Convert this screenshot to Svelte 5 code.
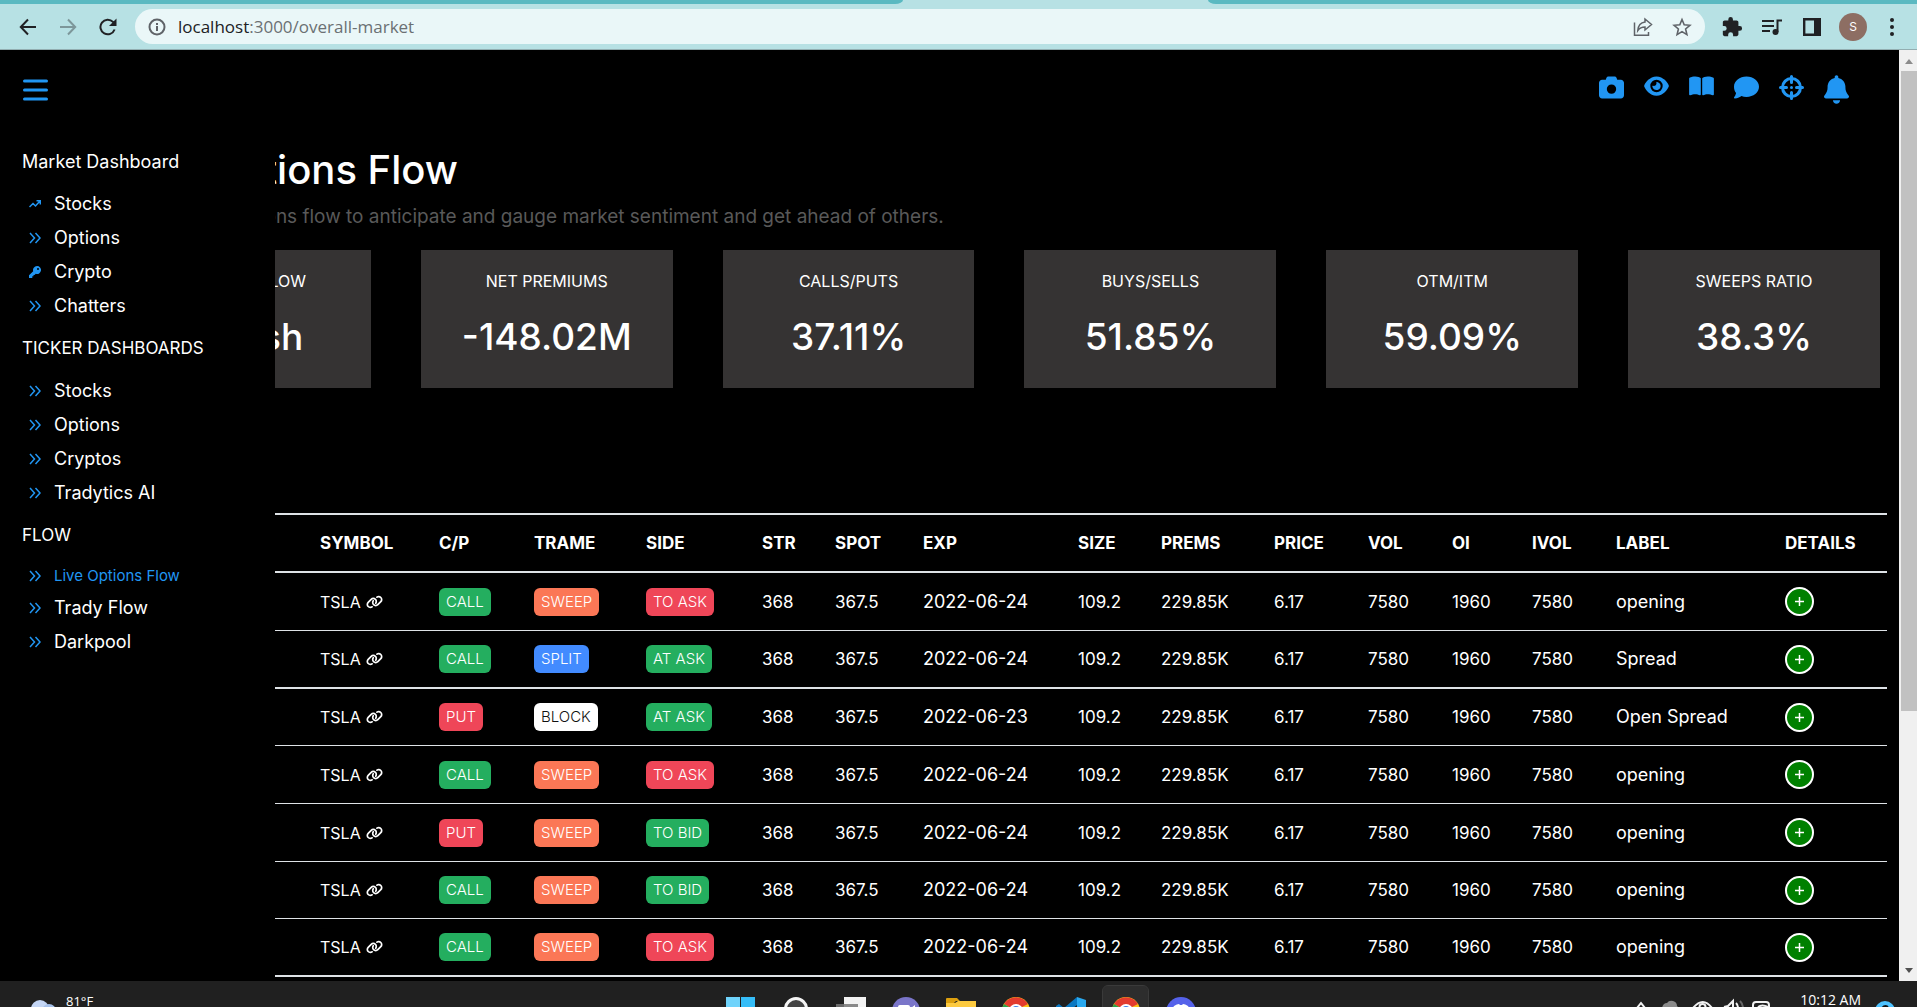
<script>
  const groups = [
    {
      title: 'Market Dashboard',
      large: true,
      items: [
        { label: 'Stocks', icon: 'trend' },
        { label: 'Options', icon: 'angles' },
        { label: 'Crypto', icon: 'key' },
        { label: 'Chatters', icon: 'angles' }
      ]
    },
    {
      title: 'TICKER DASHBOARDS',
      items: [
        { label: 'Stocks', icon: 'angles' },
        { label: 'Options', icon: 'angles' },
        { label: 'Cryptos', icon: 'angles' },
        { label: 'Tradytics AI', icon: 'angles' }
      ]
    },
    {
      title: 'FLOW',
      items: [
        { label: 'Live Options Flow', icon: 'angles', active: true },
        { label: 'Trady Flow', icon: 'angles' },
        { label: 'Darkpool', icon: 'angles' }
      ]
    }
  ];

  const cards = [
    ['OVERALL FLOW', 'Bullish'],
    ['NET PREMIUMS', '-148.02M'],
    ['CALLS/PUTS', '37.11%'],
    ['BUYS/SELLS', '51.85%'],
    ['OTM/ITM', '59.09%'],
    ['SWEEPS RATIO', '38.3%']
  ];

  const columns = [
    ['TIME', 191], ['SYMBOL', 119], ['C/P', 95], ['TRAME', 112], ['SIDE', 116], ['STR', 73],
    ['SPOT', 88], ['EXP', 155], ['SIZE', 83], ['PREMS', 113], ['PRICE', 94], ['VOL', 84],
    ['OI', 80], ['IVOL', 84], ['LABEL', 169], ['DETAILS', 112]
  ];

  const tone = {
    CALL: 'green', PUT: 'red', SWEEP: 'orange', SPLIT: 'blue', BLOCK: 'white',
    'TO ASK': 'red', 'AT ASK': 'green', 'TO BID': 'green'
  };

  const rows = [
    ['CALL', 'SWEEP', 'TO ASK', '2022-06-24', 'opening'],
    ['CALL', 'SPLIT', 'AT ASK', '2022-06-24', 'Spread'],
    ['PUT', 'BLOCK', 'AT ASK', '2022-06-23', 'Open Spread'],
    ['CALL', 'SWEEP', 'TO ASK', '2022-06-24', 'opening'],
    ['PUT', 'SWEEP', 'TO BID', '2022-06-24', 'opening'],
    ['CALL', 'SWEEP', 'TO BID', '2022-06-24', 'opening'],
    ['CALL', 'SWEEP', 'TO ASK', '2022-06-24', 'opening']
  ];
</script>

{#snippet chrome()}
  <svg width="28" height="28" viewBox="0 0 28 28">
    <circle cx="14" cy="14" r="14" fill="#fbc116" />
    <path d="M14 14 2 7A14 14 0 0 1 26 7L20 10z" fill="#e33b2e" />
    <path d="M14 14 2 7A14 14 0 0 0 13 28L20 17z" fill="#2ba24c" />
    <circle cx="14" cy="14" r="7" fill="#fff" />
    <circle cx="14" cy="14" r="5" fill="#3b7de8" />
  </svg>
{/snippet}

<div class="screen">
  <div class="tabs"><div class="strip left"></div><div class="strip right"></div></div>
  <div class="toolbar">
    <button class="nav" aria-label="Back">
      <svg width="18" height="18" viewBox="0 0 18 18" fill="none" stroke="#202124" stroke-width="2"><path d="M17 9H2M9 1.500 1.800 9 9 16.500" /></svg>
    </button>
    <button class="nav" aria-label="Forward">
      <svg width="18" height="18" viewBox="0 0 18 18" fill="none" stroke="#7d979a" stroke-width="2"><path d="M1 9h15M9 1.500 16.200 9 9 16.500" /></svg>
    </button>
    <button class="nav" aria-label="Reload">
      <svg width="18" height="18" viewBox="0 0 18 18" fill="none" stroke="#202124" stroke-width="2"><path d="M15.600 11.500A7.300 7.300 0 1 1 14 3.900L16 6" /><path d="M17.500.500V8H10z" fill="#202124" stroke="none" /></svg>
    </button>
    <div class="omnibox">
      <svg width="18" height="18" viewBox="0 0 18 18" fill="none" stroke="#5f6368" stroke-width="2"><circle cx="9" cy="9" r="7.500" /><path d="M9 8v5M9 5v2" /></svg>
      <a class="url" href="http://localhost:3000/overall-market"><b>localhost</b>:3000/overall-market</a>
      <button aria-label="Share">
        <svg width="20" height="20" viewBox="0 0 20 20" fill="none" stroke="#5f6368" stroke-width="1.500"><path d="M1.500 5.500v12.700H15.500V15M12 2l6.500 5.500L12 13V10C8.500 10 6.500 11 4.800 13.500 5.200 8.500 8 5.500 12 5z" /></svg>
      </button>
      <button aria-label="Bookmark">
        <svg width="20" height="20" viewBox="0 0 20 20" fill="none" stroke="#5f6368" stroke-width="1.600"><path d="m10 2.500 2.200 5.300 5.700.500-4.300 3.700 1.300 5.600L10 14.600l-4.900 3 1.300-5.600L2.100 8.300l5.700-.500z" /></svg>
      </button>
    </div>
    <button class="nav" aria-label="Extensions">
      <svg width="22" height="22" viewBox="0 0 24 24" fill="#202124"><path d="M20.500 11H19V7c0-1.100-.9-2-2-2h-4V3.500a2.500 2.500 0 0 0-5 0V5H4c-1.100 0-2 .9-2 2v3.800h1.500a2.700 2.700 0 0 1 0 5.400H2V20c0 1.100.9 2 2 2h3.800v-1.500a2.700 2.700 0 0 1 5.400 0V22H17c1.100 0 2-.9 2-2v-4h1.500a2.500 2.500 0 0 0 0-5z" /></svg>
    </button>
    <button class="nav" aria-label="Media controls">
      <svg width="20" height="18" viewBox="0 0 20 18" fill="none" stroke="#202124" stroke-width="2"><path d="M0 3h12M0 8h12M0 13h8M15.500 14V2.500H20" /><circle cx="13.500" cy="14" r="3" fill="#202124" stroke="none" /></svg>
    </button>
    <button class="nav" aria-label="Side panel">
      <svg width="18" height="18" viewBox="0 0 18 18"><path d="M1.200 1.200h15.600v15.600H1.200z" fill="none" stroke="#202124" stroke-width="2.400" /><path d="M11 1h6v16h-6z" fill="#202124" /></svg>
    </button>
    <button class="avatar" aria-label="Profile">S</button>
    <button class="dots" aria-label="Menu">
      <svg width="6" height="18" viewBox="0 0 6 18" fill="#202124"><circle cx="3" cy="2" r="2" /><circle cx="3" cy="9" r="2" /><circle cx="3" cy="16" r="2" /></svg>
    </button>
  </div>

  <div class="viewport">
    <div class="page">
      <header>
        <button aria-label="Toggle menu">
          <svg width="25" height="24" viewBox="0 0 25 24" stroke="#2196f3" stroke-width="3" stroke-linecap="round"><path d="M1.500 3h22M1.500 12h22M1.500 21h22" /></svg>
        </button>
        <div class="actions">
          <button aria-label="Camera"><svg width="25" height="25" viewBox="0 0 512 512"><path d="M149.100 64.800L138.700 96H64C28.700 96 0 124.700 0 160V416c0 35.300 28.700 64 64 64H448c35.300 0 64-28.700 64-64V160c0-35.300-28.700-64-64-64H373.300L362.900 64.800C356.400 45.200 338.100 32 317.400 32H194.600c-20.700 0-39 13.200-45.500 32.800zM256 192a96 96 0 1 1 0 192 96 96 0 1 1 0-192z" fill-rule="evenodd" /></svg></button>
          <button aria-label="Watch"><svg width="25" height="22" viewBox="0 0 576 512"><path fill-rule="evenodd" d="M288 32c-80.800 0-145.500 36.800-192.600 80.600C48.600 156 17.300 208 2.500 243.700c-3.300 7.900-3.300 16.700 0 24.600C17.300 304 48.600 356 95.400 399.400C142.500 443.200 207.200 480 288 480s145.500-36.800 192.600-80.600c46.800-43.500 78.100-95.400 93-131.100c3.300-7.900 3.300-16.700 0-24.600c-14.900-35.700-46.200-87.700-93-131.100C433.500 68.800 368.800 32 288 32zM144 256a144 144 0 1 1 288 0 144 144 0 1 1 -288 0zm144-64c0 35.300-28.700 64-64 64c-7.100 0-13.900-1.200-20.300-3.300c-5.500-1.800-11.900 1.600-11.700 7.400c.3 6.900 1.300 13.800 3.200 20.700c13.700 51.200 66.400 81.600 117.600 67.900s81.600-66.400 67.900-117.600c-11.100-41.500-47.800-69.400-88.600-71.100c-5.800-.2-9.200 6.100-7.400 11.700c2.100 6.400 3.300 13.200 3.300 20.300z" /></svg></button>
          <button aria-label="Guide"><svg width="25" height="22" viewBox="0 0 576 512"><path d="M249.600 471.500c10.800 3.800 22.400-4.100 22.400-15.500V78.600c0-4.200-1.600-8.400-5-11C247.400 52 202.400 32 144 32C93.500 32 46.300 45.300 18.100 56.100C6.800 60.500 0 71.700 0 83.800V454.100c0 11.900 12.800 20.200 24.100 16.500C55.600 460.100 105.500 448 144 448c33.900 0 79 14 105.600 23.500zm76.800 0C353 462 398.100 448 432 448c38.500 0 88.400 12.100 119.900 22.600c11.300 3.800 24.100-4.600 24.100-16.500V83.800c0-12.100-6.800-23.300-18.100-27.600C529.700 45.300 482.500 32 432 32c-58.400 0-103.400 20-123 35.600c-3.300 2.600-5 6.800-5 11V456c0 11.400 11.700 19.300 22.400 15.500z" /></svg></button>
          <button aria-label="Chat"><svg width="25" height="25" viewBox="0 0 512 512"><path d="M512 240c0 114.900-114.600 208-256 208c-37.100 0-72.300-6.400-104.100-17.900c-11.900 8.700-31.300 20.600-54.300 30.600C73.600 471.100 44.700 480 16 480c-16 0-20-18-11-28c15-17 28-42 37-82C15.600 335 0 291 0 240C0 125.100 114.600 32 256 32s256 93.100 256 208z" /></svg></button>
          <button aria-label="Target"><svg class="line" width="25" height="25" viewBox="0 0 25 25"><circle cx="12.500" cy="12.500" r="9" /><path d="M12.500 1.500v6M12.500 17.500v6M1.500 12.500h6M17.500 12.500h6" /><circle class="dot" cx="12.500" cy="12.500" r="1.500" /></svg></button>
          <button aria-label="Alerts"><svg width="25" height="29" viewBox="0 0 448 512"><path d="M224 0c-17.700 0-32 14.300-32 32V51.200C119 66 64 130.600 64 208v18.800c0 47-17.300 92.400-48.500 127.600l-7.400 8.300c-8.400 9.400-10.400 22.900-5.300 34.400S19.400 416 32 416H416c12.600 0 24-7.400 29.200-18.900s3.100-25-5.300-34.400l-7.400-8.300C401.300 319.200 384 273.900 384 226.800V208c0-77.400-55-142-128-156.800V32c0-17.700-14.300-32-32-32zm45.300 493.300c12-12 18.700-28.300 18.700-45.300H224 160c0 17 6.700 33.300 18.700 45.300s28.300 18.700 45.300 18.700s33.300-6.700 45.300-18.700z" /></svg></button>
        </div>
      </header>

      <main>
        <h1>Live Options Flow</h1>
        <p>Use our live options flow to anticipate and gauge market sentiment and get ahead of others.</p>
        <section class="cards">
          {#each cards as [label, value]}
            <article>
              <h2>{label}</h2>
              <strong>{value}</strong>
            </article>
          {/each}
        </section>

        <table>
          <colgroup>
            {#each columns as [, width]}<col style:width="{width}px" />{/each}
          </colgroup>
          <thead>
            <tr>{#each columns as [name]}<th>{name}</th>{/each}</tr>
          </thead>
          <tbody>
            {#each rows as [cp, trame, side, exp, label]}
              <tr>
                <td></td>
                <td class="symbol">
                  <a href="#tsla">TSLA
                    <svg width="17" height="14" viewBox="0 0 640 512"><path d="M579.800 267.700c56.500-56.500 56.500-148 0-204.500c-50-50-128.800-56.500-186.300-15.400l-1.600 1.100c-14.400 10.300-17.700 30.300-7.400 44.600s30.300 17.700 44.600 7.400l1.600-1.100c32.100-22.900 76-19.300 103.800 8.600c31.500 31.500 31.500 82.500 0 114L422.300 334.800c-31.500 31.500-82.500 31.500-114 0c-27.900-27.900-31.500-71.800-8.600-103.800l1.100-1.600c10.300-14.400 6.900-34.400-7.400-44.600s-34.400-6.900-44.600 7.400l-1.100 1.600C206.500 251.200 213 330 263 380c56.500 56.500 148 56.500 204.500 0L579.800 267.700zM60.200 244.300c-56.500 56.500-56.500 148 0 204.500c50 50 128.800 56.500 186.300 15.400l1.600-1.100c14.400-10.300 17.700-30.300 7.400-44.600s-30.300-17.700-44.600-7.400l-1.600 1.100c-32.100 22.900-76 19.300-103.800-8.600C74 372 74 321 105.500 289.500L217.700 177.200c31.500-31.500 82.500-31.500 114 0c27.900 27.900 31.500 71.800 8.600 103.900l-1.100 1.600c-10.300 14.400-6.900 34.400 7.400 44.600s34.400 6.900 44.600-7.400l1.100-1.600C433.500 260.800 427 182 377 132c-56.500-56.500-148-56.500-204.500 0L60.200 244.300z" /></svg>
                  </a>
                </td>
                <td><span class="badge {tone[cp]}">{cp}</span></td>
                <td><span class="badge {tone[trame]}">{trame}</span></td>
                <td><span class="badge {tone[side]}">{side}</span></td>
                <td>368</td>
                <td>367.5</td>
                <td class="wide">{exp}</td>
                <td>109.2</td>
                <td>229.85K</td>
                <td>6.17</td>
                <td>7580</td>
                <td>1960</td>
                <td>7580</td>
                <td class="wide">{label}</td>
                <td>
                  <button class="plus" aria-label="Show details">
                    <svg width="11" height="11" viewBox="0 0 11 11" stroke="#fff" stroke-width="1.500"><path d="M5.500 1v9M1 5.500h9" /></svg>
                  </button>
                </td>
              </tr>
            {/each}
          </tbody>
        </table>
      </main>

      <aside>
        <nav>
          {#each groups as group}
            <h3 class:large={group.large}>{group.title}</h3>
            <ul>
              {#each group.items as item}
                <li class:active={item.active}>
                  {#if item.icon === 'trend'}
                    <svg width="12" height="12" viewBox="0 0 12 12"><path d="M.500 9 4 5.500 6.500 8 11 3M7.500 2.800H11.300V6.500" /></svg>
                  {:else if item.icon === 'key'}
                    <svg class="solid" width="12" height="12" viewBox="0 0 12 12"><path fill-rule="evenodd" d="M8 0a4 4 0 1 1-1.200 7.800L5.500 9H4.500v1.200H3.300V12H0V9.200L4.200 5.200A4 4 0 0 1 8 0zM9 2a1 1 0 1 0 0 2 1 1 0 0 0 0-2z" /></svg>
                  {:else}
                    <svg width="12" height="12" viewBox="0 0 12 12"><path d="M1 1l4.500 5L1 11M6.500 1 11 6 6.500 11" /></svg>
                  {/if}
                  <a href="#{item.label}">{item.label}</a>
                </li>
              {/each}
            </ul>
          {/each}
        </nav>
      </aside>
    </div>

    <div class="scrollbar">
      <i class="up"></i>
      <div class="thumb"></div>
      <i class="down"></i>
    </div>
  </div>

  <footer>
    <div class="weather">
      <svg width="28" height="16" viewBox="0 0 28 16"><circle cx="11" cy="10" r="9" fill="#c4d6f5" /><circle cx="20" cy="12" r="7" fill="#a5c0ea" /><circle cx="6" cy="14" r="6" fill="#a9c5ee" /></svg>
      <span>81°F</span>
    </div>
    <div class="apps">
      <span><svg width="30" height="28" viewBox="0 0 30 28"><path d="M0 0h14v13H0zM0 15h14v13H0z" fill="#6fd3fb" /><path d="M15 0h14v13H15zM15 15h14v13H15z" fill="#35bdf8" /></svg></span>
      <span><svg width="24" height="28" viewBox="0 0 24 28"><circle cx="12" cy="12" r="10.500" fill="#444" stroke="#f4f4f4" stroke-width="3" /></svg></span>
      <span><svg width="30" height="28" viewBox="0 0 30 28"><path d="M8 0h22v20H8z" fill="#f2f2f2" /><path d="M0 7h22v18H0z" fill="#777" fill-opacity=".85" /></svg></span>
      <span><svg width="28" height="28" viewBox="0 0 28 28"><circle cx="14" cy="14" r="14" fill="#7a75c9" /><rect x="6" y="8" width="12" height="12" rx="2" fill="#fff" /><path d="m19 11 4-3v9l-4-3z" fill="#fff" /></svg></span>
      <span><svg width="30" height="27" viewBox="0 0 30 27"><path d="M0 2q0-1 1-1h10l3 3h-4L8 6H0z" fill="#dda00f" /><path d="M0 6h9l3-2h18v22H0z" fill="#fdca3f" /></svg></span>
      <span>{@render chrome()}</span>
      <span><svg width="30" height="30" viewBox="0 0 30 30"><path d="m0 9 3-2 5 4L21 0v30L0 11z" fill="#0a78c2" /><path d="m21 0 9 3v24l-9 3z" fill="#29a9f0" /><path d="M21 8v14l-9-7z" fill="#202020" /></svg></span>
      <span class="current">{@render chrome()}</span>
      <span><svg width="30" height="30" viewBox="0 0 30 30"><circle cx="15" cy="15" r="15" fill="#5562ea" /><path d="M8 9q3-2 5-2l1 1h2l1-1q2 0 5 2 3 5 3 10l-5 2H10l-5-2q0-5 3-10z" fill="#fff" /></svg></span>
    </div>
    <div class="tray">
      <svg width="136" height="12" viewBox="0 0 136 12" fill="none" stroke="#f2f2f2" stroke-width="2"><path d="m1 12 4-5 4 5" /><path d="M26 12q1-5 5-5 2-3 6-2 4 1 4 5l2 2z" fill="#8a8a8a" stroke="none" /><path d="M57 12q10-12 19 0" /><circle cx="66.500" cy="11" r="3" /><path d="m88 11 4-1 5-5v7M100 7q2 2 2 5" /><path d="M104 5q3 3 3 7" stroke="#666" /><path d="M117 12V9q0-3 3-3h10q3 0 3 3v3M122 11q4-3 10 0" /></svg>
      <time>10:12 AM</time>
      <svg class="count" width="20" height="20" viewBox="0 0 20 20"><circle cx="10" cy="10" r="10" fill="#4cc2ff" /><path d="M7 8q1-3 3.500-3T13 8q0 2-6 7h7" fill="none" stroke="#111" stroke-width="2" /></svg>
    </div>
  </footer>
</div>

<style>
  :global(body) { margin: 0; background: #000; }
  .screen {
    height: 100vh;
    display: flex;
    flex-direction: column;
    overflow: hidden;
    color: #fff;
    font: 17px/26px Inter, "Open Sans", sans-serif;
  }
  button { border: 0; padding: 0; margin: 0; background: none; display: grid; place-items: center; color: inherit; font: inherit; }
  a { color: inherit; text-decoration: none; }
  svg { display: block; flex: none; }

  .tabs { height: 4px; flex: none; background: #b7e1e4; display: grid; grid-template-columns: 903fr 305fr 709fr; }
  .strip { background: #5ab9c1; }
  .left { border-bottom-right-radius: 8px 4px; }
  .right { grid-column: 3; border-bottom-left-radius: 8px 4px; }
  .toolbar { box-sizing: border-box; height: 46px; flex: none; display: flex; align-items: center; background: #b7e1e4; border-bottom: 1px solid #93aeb1; padding: 0 22px 0 8px; }
  .nav { width: 40px; height: 36px; }
  .omnibox { flex: 1; height: 35px; margin: 0 7px; padding: 0 13px; display: flex; align-items: center; gap: 19px; border-radius: 18px; background: #eaf7f8; color: #5f6368; }
  .url { flex: 1; margin-left: -7px; font: 17px/24px "Open Sans", sans-serif; color: #6b7073; }
  .url b { font-weight: 400; color: #202124; }
  .avatar { width: 28px; height: 28px; margin: 0 7px; border-radius: 50%; background: #8d6e63; font-size: 12px; line-height: 28px; color: #fff; }
  .dots { width: 6px; height: 28px; margin-left: 15px; }

  .viewport { flex: 1; min-height: 0; display: flex; }
  .page { flex: 1; min-width: 0; position: relative; overflow: hidden; background: #000; }
  header { display: flex; justify-content: space-between; padding: 25px 50px 0 23px; height: 50px; box-sizing: border-box; }
  header button { align-self: start; margin-top: 3px; }
  .actions { display: flex; gap: 20px; fill: #2196f3; }
  .actions button { margin-top: 0; }
  .line { fill: none; stroke: #2196f3; stroke-width: 3; stroke-linecap: round; }
  .dot { fill: #2196f3; stroke: none; }

  main { padding: 45px 12px 0 119px; }
  h1 { margin: 0; font-size: 40px; line-height: 50px; font-weight: 500; }
  p { margin: 9px 0 20px; font-size: 19px; line-height: 26px; color: #595959; white-space: nowrap; }
  .cards { display: grid; grid-template-columns: repeat(6, 1fr); gap: 50px; margin: 0 7px 125px 0; }
  article { box-sizing: border-box; height: 138px; padding-top: 18px; background: #353333; text-align: center; }
  h2 { margin: 0 0 18px; font-size: 16px; line-height: 26px; font-weight: 400; }
  article strong { display: block; font-size: 37px; line-height: 50px; font-weight: 500; }

  table { width: 100%; table-layout: fixed; border-collapse: separate; border-spacing: 0; border-top: 2px solid #dee2e6; }
  th, td { box-sizing: border-box; height: 58px; padding: 0 0 0 10px; border-bottom: 1px solid #dee2e6; text-align: left; white-space: nowrap; }
  th, tr:nth-child(2) td, tr:last-child td { border-bottom-width: 2px; }
  tr:nth-child(3n) td { height: 57px; }
  td a { display: flex; align-items: center; gap: 5px; fill: #fff; }
  .symbol { font-size: 16px; }
  .wide { font-size: 18px; }
  .badge { display: inline-block; padding: 0 7px; border-radius: 6px; font-size: 15px; line-height: 28px; font-weight: 300; vertical-align: middle; }
  .green { background: #24ae5f; }
  .red { background: #ef4658; }
  .orange { background: #fb7756; }
  .blue { background: #428bff; }
  .white { background: #fff; color: #111; }
  .plus { box-sizing: border-box; width: 29px; height: 29px; border: 2px solid #fff; border-radius: 50%; background: #008000; }

  aside { position: absolute; inset: 86px auto 0 0; width: 275px; box-sizing: border-box; padding-left: 22px; background: #000; }
  h3 { margin: 0; font-size: 17px; line-height: 51px; font-weight: 400; }
  .large { font-size: 18px; }
  ul { margin: 0; padding: 0 0 0 7px; list-style: none; }
  li { display: flex; align-items: center; gap: 13px; font-size: 18px; line-height: 34px; }
  li svg { fill: none; stroke: #2196f3; stroke-width: 1.500; }
  li svg.solid { fill: #2196f3; stroke: none; }
  .active { font-size: 15px; line-height: 30px; color: #2196f3; }

  .scrollbar { width: 18px; box-sizing: border-box; flex: none; display: flex; flex-direction: column; align-items: center; background: #f0f0f0; padding: 9px 0 8px 2px; }
  .scrollbar i { border: 4px solid transparent; }
  .up { border-top: 0 !important; border-bottom: 5px solid #8b8b8b !important; }
  .down { border-bottom: 0 !important; border-top: 5px solid #505050 !important; margin-top: auto; }
  .thumb { width: 100%; height: 70%; margin-top: 7px; background: #c1c1c1; }

  footer { height: 26px; flex: none; display: grid; grid-template-columns: 1fr auto 1fr; padding-left: 4px; overflow: hidden; background: #202020; font: 13px/18px "Open Sans", sans-serif; }
  .weather { display: flex; align-items: start; gap: 9px; padding: 11px 0 0 25px; }
  .weather svg { margin-top: 7px; }
  .apps { display: flex; }
  .apps span { width: 55px; height: 42px; box-sizing: border-box; padding-top: 16px; display: flex; justify-content: center; }
  .apps .current { width: 45px; height: 38px; margin: 5px 5px 0; padding-top: 11px; border-radius: 5px; background: #2d2d2d; outline: 1px solid #3a3a3a; }
  .tray { display: flex; justify-content: end; align-items: start; padding: 10px 22px 0 0; font-size: 14px; }
  .tray svg { margin: 5px 28px 0 0; }
  .tray .count { margin: 10px 0 0 14px; }
</style>
